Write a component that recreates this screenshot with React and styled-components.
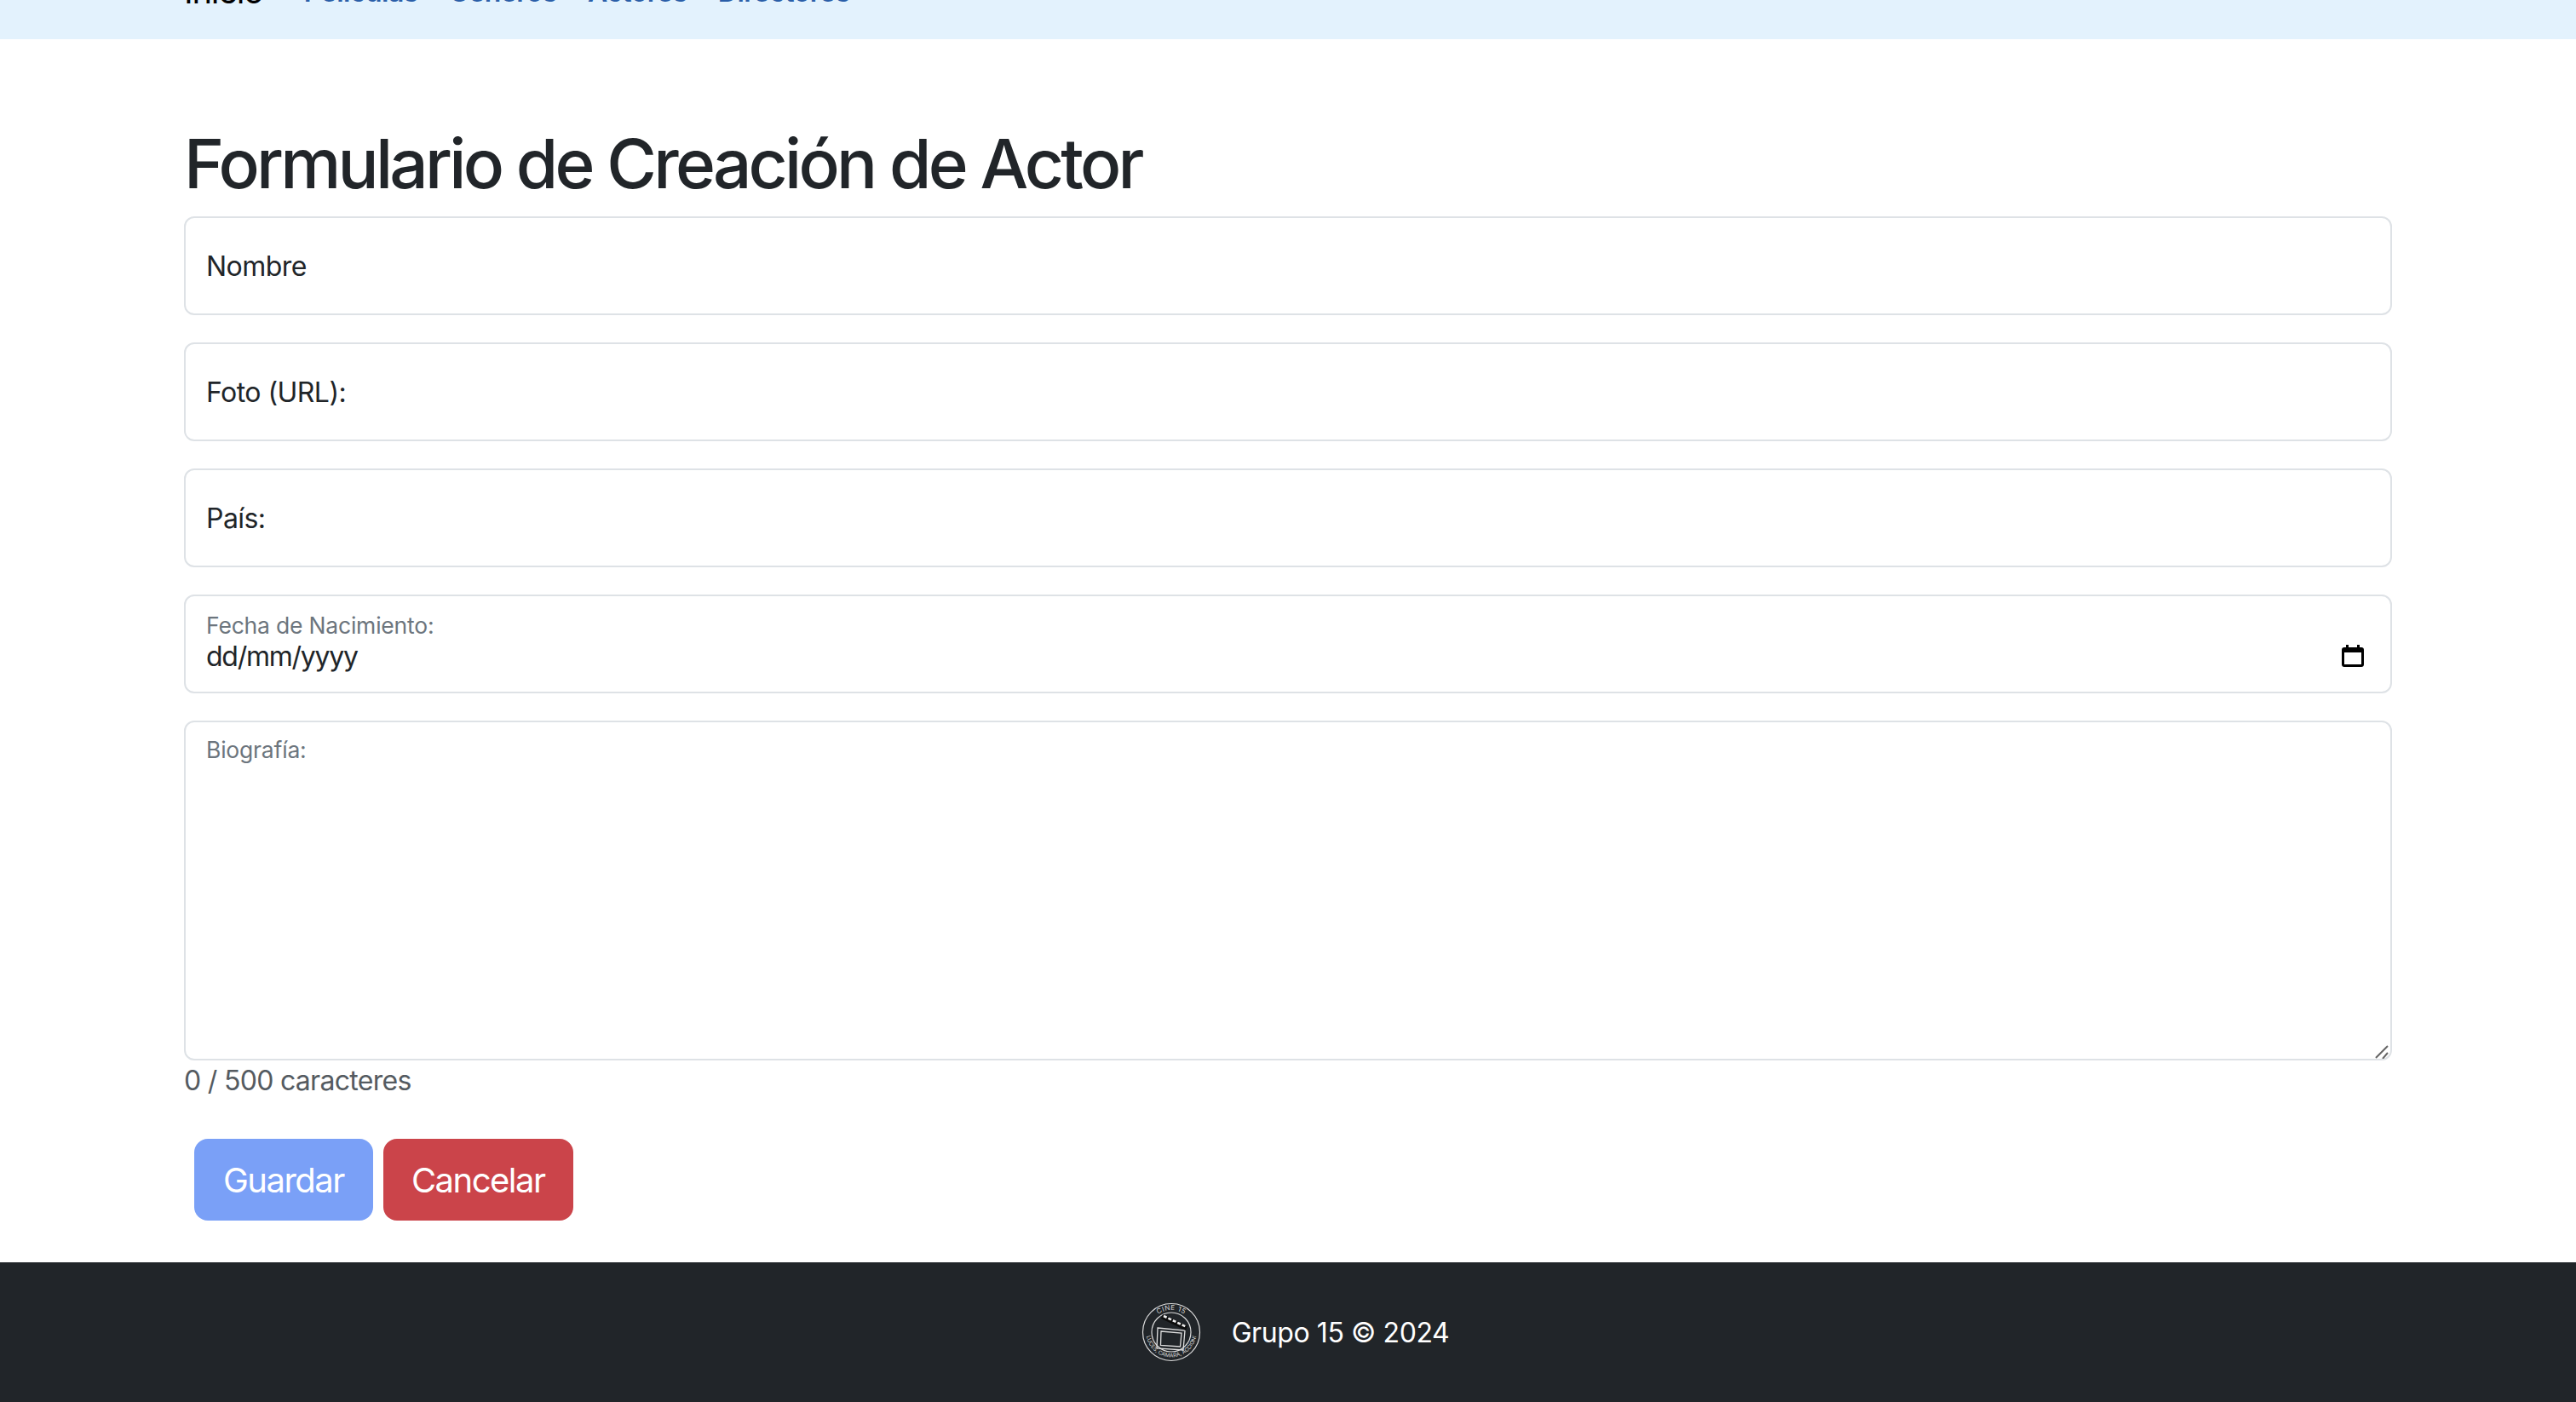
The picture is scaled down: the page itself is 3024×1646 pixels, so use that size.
import React, { useState } from "react";
import styled, { createGlobalStyle } from "styled-components";

const GlobalStyle = createGlobalStyle`
  html, body {
    margin: 0;
    padding: 0;
    background: #fff;
  }
  body {
    font-family: Inter, "Liberation Sans", sans-serif;
    color: #212529;
    font-size: 32px;
  }
  * {
    box-sizing: border-box;
  }
`;

const Page = styled.div`
  width: 3024px;
  height: 1646px;
  display: flex;
  flex-direction: column;
  overflow: hidden;
`;

const NavBar = styled.nav`
  height: 46px;
  flex: none;
  background: #e3f2fd;
  padding: 0 216px;
  overflow: hidden;
`;

const NavInner = styled.div`
  display: flex;
  align-items: flex-start;
  margin-top: -40px;
`;

const Brand = styled.a`
  font-size: 40px;
  line-height: 60px;
  letter-spacing: -1.3px;
  color: #000;
  margin-right: 48px;
`;

const NavLink = styled.a`
  font-size: 32px;
  font-weight: 600;
  line-height: 48px;
  letter-spacing: -0.5px;
  color: #2a5ea8;
  margin-top: 7px;
  margin-right: 36px;
`;

const Main = styled.main`
  flex: 1;
  padding: 0 216px;
`;

const Title = styled.h1`
  margin: 98px 0 0;
  font-size: 80px;
  font-weight: 500;
  line-height: 96px;
  letter-spacing: -3.75px;
  color: #212529;
`;

const Form = styled.form`
  margin-top: 14px;
  display: flex;
  flex-direction: column;
  gap: 32px;
`;

const Field = styled.label`
  position: relative;
  display: flex;
  flex-direction: column;
  justify-content: ${(p) => (p.$tall ? "flex-start" : "center")};
  height: ${(p) => (p.$tall ? "399px" : "116px")};
  padding: ${(p) => (p.$tall ? "14px 24px" : "0 24px")};
  border: 2px solid #dee2e6;
  border-radius: 12px;
  background: #fff;
`;

const FieldLabel = styled.span`
  font-size: 32px;
  line-height: 48px;
  letter-spacing: -0.55px;
  color: #212529;
  padding-top: 1px;
`;

const SmallLabel = styled.span`
  font-size: 26.5px;
  line-height: 36px;
  letter-spacing: -0.2px;
  color: #6c757d;
`;

const DateText = styled.span`
  font-size: 32px;
  line-height: 38px;
  letter-spacing: -1.25px;
  color: #212529;
  margin-bottom: 6px;
`;

const Control = styled.input`
  position: absolute;
  inset: 0;
  width: 100%;
  height: 100%;
  border: 0;
  outline: 0;
  background: transparent;
  padding: 0 24px;
`;

const Area = styled.textarea`
  position: absolute;
  inset: 0;
  width: 100%;
  height: 100%;
  border: 0;
  outline: 0;
  resize: none;
  background: transparent;
  padding: 56px 24px 20px;
  font: inherit;
`;

const CalendarIcon = styled.svg`
  position: absolute;
  right: 30px;
  top: 56px;
  width: 28px;
  height: 28px;
`;

const Grip = styled.svg`
  position: absolute;
  right: 0;
  bottom: 0;
  width: 20px;
  height: 20px;
`;

const Counter = styled.small`
  display: block;
  margin-top: -32px;
  font-size: 32px;
  line-height: 48px;
  letter-spacing: -0.7px;
  color: #555b61;
`;

const Actions = styled.div`
  display: flex;
  gap: 12px;
  padding: 0 12px;
  margin-top: 12px;
`;

const Button = styled.button`
  height: 96px;
  padding: 0 ${(p) => p.$pad}px;
  border: 0;
  border-radius: 16px;
  font-family: inherit;
  font-size: 40px;
  letter-spacing: -1.5px;
  color: #fff;
  background: ${(p) => p.$bg};
`;

const Footer = styled.footer`
  flex: none;
  height: 164px;
  background: #212529;
  display: flex;
  align-items: center;
  justify-content: center;
  gap: 36px;
  padding-left: 17px;
  color: #fff;
`;

const Logo = styled.svg`
  width: 70px;
  height: 70px;
  flex: none;
`;

const FooterText = styled.span`
  font-size: 32px;
  letter-spacing: -0.4px;
`;

const Calendar = () => (
  <CalendarIcon viewBox="0 0 28 28" aria-hidden="true">
    <path
      d="M6 1h3v3h10V1h3v3h2a3 3 0 0 1 3 3v17a3 3 0 0 1-3 3H4a3 3 0 0 1-3-3V7a3 3 0 0 1 3-3h2V1zM4 10v14h20V10H4z"
      fill="#000"
    />
  </CalendarIcon>
);

const ResizeGrip = () => (
  <Grip viewBox="0 0 20 20" aria-hidden="true">
    <path d="M3 19L17 5M11 20L17 13" stroke="#666" strokeWidth="2" fill="none" />
  </Grip>
);

const CineLogo = () => (
  <Logo viewBox="0 0 70 70" aria-hidden="true">
    <defs>
      <path id="logo-top" d="M9 35a26 26 0 0 1 52 0" />
      <path id="logo-bottom" d="M5.500 35a29.500 29.500 0 0 0 59 0" />
    </defs>
    <g fill="none" stroke="#dcdcdc">
      <circle cx="35" cy="35" r="33.500" strokeWidth="1.200" />
      <circle cx="35" cy="35" r="23" strokeWidth="1.200" />
      <path d="M19 30l32 3-2 23-31-2z" strokeWidth="1.300" />
      <path d="M23 34l24 2-1.500 16-23-1.500z" strokeWidth="1.300" />
    </g>
    <path d="M25 14l29 14-2 5-29-14z" fill="#0d0d0d" />
    <path d="M26 16l27 13" stroke="#f0f0f0" strokeWidth="2.600" strokeDasharray="4 2" fill="none" />
    <text fill="#dcdcdc" fontSize="8" letterSpacing="0.5" textAnchor="middle">
      <textPath href="#logo-top" startOffset="50%">
        CINE 15
      </textPath>
    </text>
    <text fill="#dcdcdc" fontSize="6.400" textAnchor="middle">
      <textPath href="#logo-bottom" startOffset="50%">
        LUCES, CAMARA, ACCION!
      </textPath>
    </text>
  </Logo>
);

export default function App() {
  const [bio, setBio] = useState("");

  return (
    <Page>
      <GlobalStyle />
      <NavBar>
        <NavInner>
          <Brand>Inicio</Brand>
          <NavLink>Películas</NavLink>
          <NavLink>Géneros</NavLink>
          <NavLink>Actores</NavLink>
          <NavLink>Directores</NavLink>
        </NavInner>
      </NavBar>

      <Main>
        <Title>Formulario de Creación de Actor</Title>
        <Form onSubmit={(e) => e.preventDefault()}>
          <Field>
            <FieldLabel>Nombre</FieldLabel>
            <Control name="nombre" />
          </Field>
          <Field>
            <FieldLabel>Foto (URL):</FieldLabel>
            <Control name="foto" />
          </Field>
          <Field>
            <FieldLabel>País:</FieldLabel>
            <Control name="pais" />
          </Field>
          <Field>
            <SmallLabel>Fecha de Nacimiento:</SmallLabel>
            <DateText>dd/mm/yyyy</DateText>
            <Calendar />
          </Field>
          <Field $tall>
            <SmallLabel>Biografía:</SmallLabel>
            <Area value={bio} onChange={(e) => setBio(e.target.value)} />
            <ResizeGrip />
          </Field>
          <Counter>{bio.length} / 500 caracteres</Counter>
          <Actions>
            <Button type="submit" $bg="#7aa0f7" $pad={34}>
              Guardar
            </Button>
            <Button type="button" $bg="#cb444a" $pad={33}>
              Cancelar
            </Button>
          </Actions>
        </Form>
      </Main>

      <Footer>
        <CineLogo />
        <FooterText>Grupo 15 © 2024</FooterText>
      </Footer>
    </Page>
  );
}
